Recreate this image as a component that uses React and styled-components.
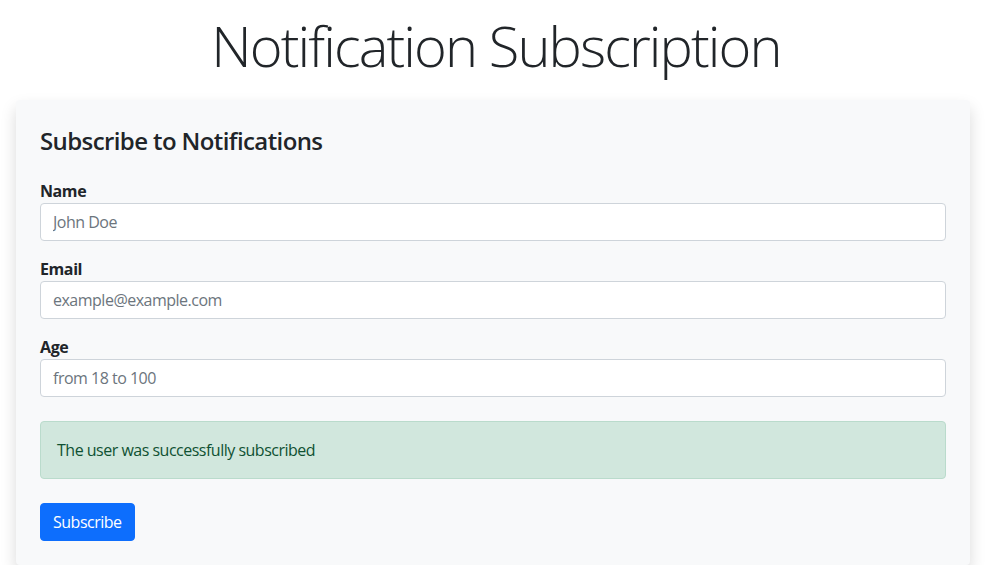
import React from "react";
import styled, { createGlobalStyle } from "styled-components";

const GlobalStyle = createGlobalStyle`
  body {
    margin: 0;
    background: #fff;
    font-family: "Segoe UI", "Open Sans", "Noto Sans", sans-serif;
    color: #212529;
  }
  * { box-sizing: border-box; }
`;

const Page = styled.div`
  padding: 0 16px;
`;

const Title = styled.h1`
  margin: 0;
  padding-top: 12px;
  height: 100px;
  text-align: center;
  font-size: 56px;
  font-weight: 300;
  line-height: 1.2;
  letter-spacing: -1.9px;
`;

const Card = styled.div`
  width: 954px;
  background: #f8f9fa;
  border-radius: 4px;
  box-shadow: 0 8px 16px rgba(0, 0, 0, 0.15);
  padding: 24px;
`;

const CardTitle = styled.h4`
  margin: 0 0 23px;
  padding-top: 3px;
  font-size: 24px;
  font-weight: 600;
  line-height: 1.2;
  letter-spacing: -0.6px;
`;

const Field = styled.div`
  margin-bottom: 16px;
`;

const Label = styled.label`
  display: block;
  font-size: 16px;
  font-weight: 700;
  line-height: 24px;
  letter-spacing: -0.4px;
`;

const Input = styled.input`
  display: block;
  width: 100%;
  height: 38px;
  padding: 6px 12px;
  font-family: inherit;
  font-size: 16px;
  letter-spacing: -0.5px;
  color: #212529;
  background: #fff;
  border: 1px solid #ced4da;
  border-radius: 4px;
  outline: none;
  &::placeholder {
    color: #6c757d;
  }
`;

const Alert = styled.div`
  margin: 24px 0;
  padding: 16px;
  font-size: 16px;
  line-height: 24px;
  letter-spacing: -0.5px;
  color: #0f5132;
  background: #d1e7dd;
  border: 1px solid #badbcc;
  border-radius: 4px;
`;

const Button = styled.button`
  height: 38px;
  padding: 6px 12px;
  font-family: inherit;
  font-size: 16px;
  line-height: 24px;
  letter-spacing: -0.5px;
  color: #fff;
  background: #0d6efd;
  border: 1px solid #0d6efd;
  border-radius: 4px;
  cursor: pointer;
`;

const fields = [
  { label: "Name", type: "text", placeholder: "John Doe" },
  { label: "Email", type: "email", placeholder: "example@example.com" },
  { label: "Age", type: "text", placeholder: "from 18 to 100" },
];

export default function App() {
  return (
    <Page>
      <GlobalStyle />
      <Title>Notification Subscription</Title>
      <Card>
        <CardTitle>Subscribe to Notifications</CardTitle>
        {fields.map((f) => (
          <Field key={f.label}>
            <Label>{f.label}</Label>
            <Input type={f.type} placeholder={f.placeholder} />
          </Field>
        ))}
        <Alert>The user was successfully subscribed</Alert>
        <Button>Subscribe</Button>
      </Card>
    </Page>
  );
}
